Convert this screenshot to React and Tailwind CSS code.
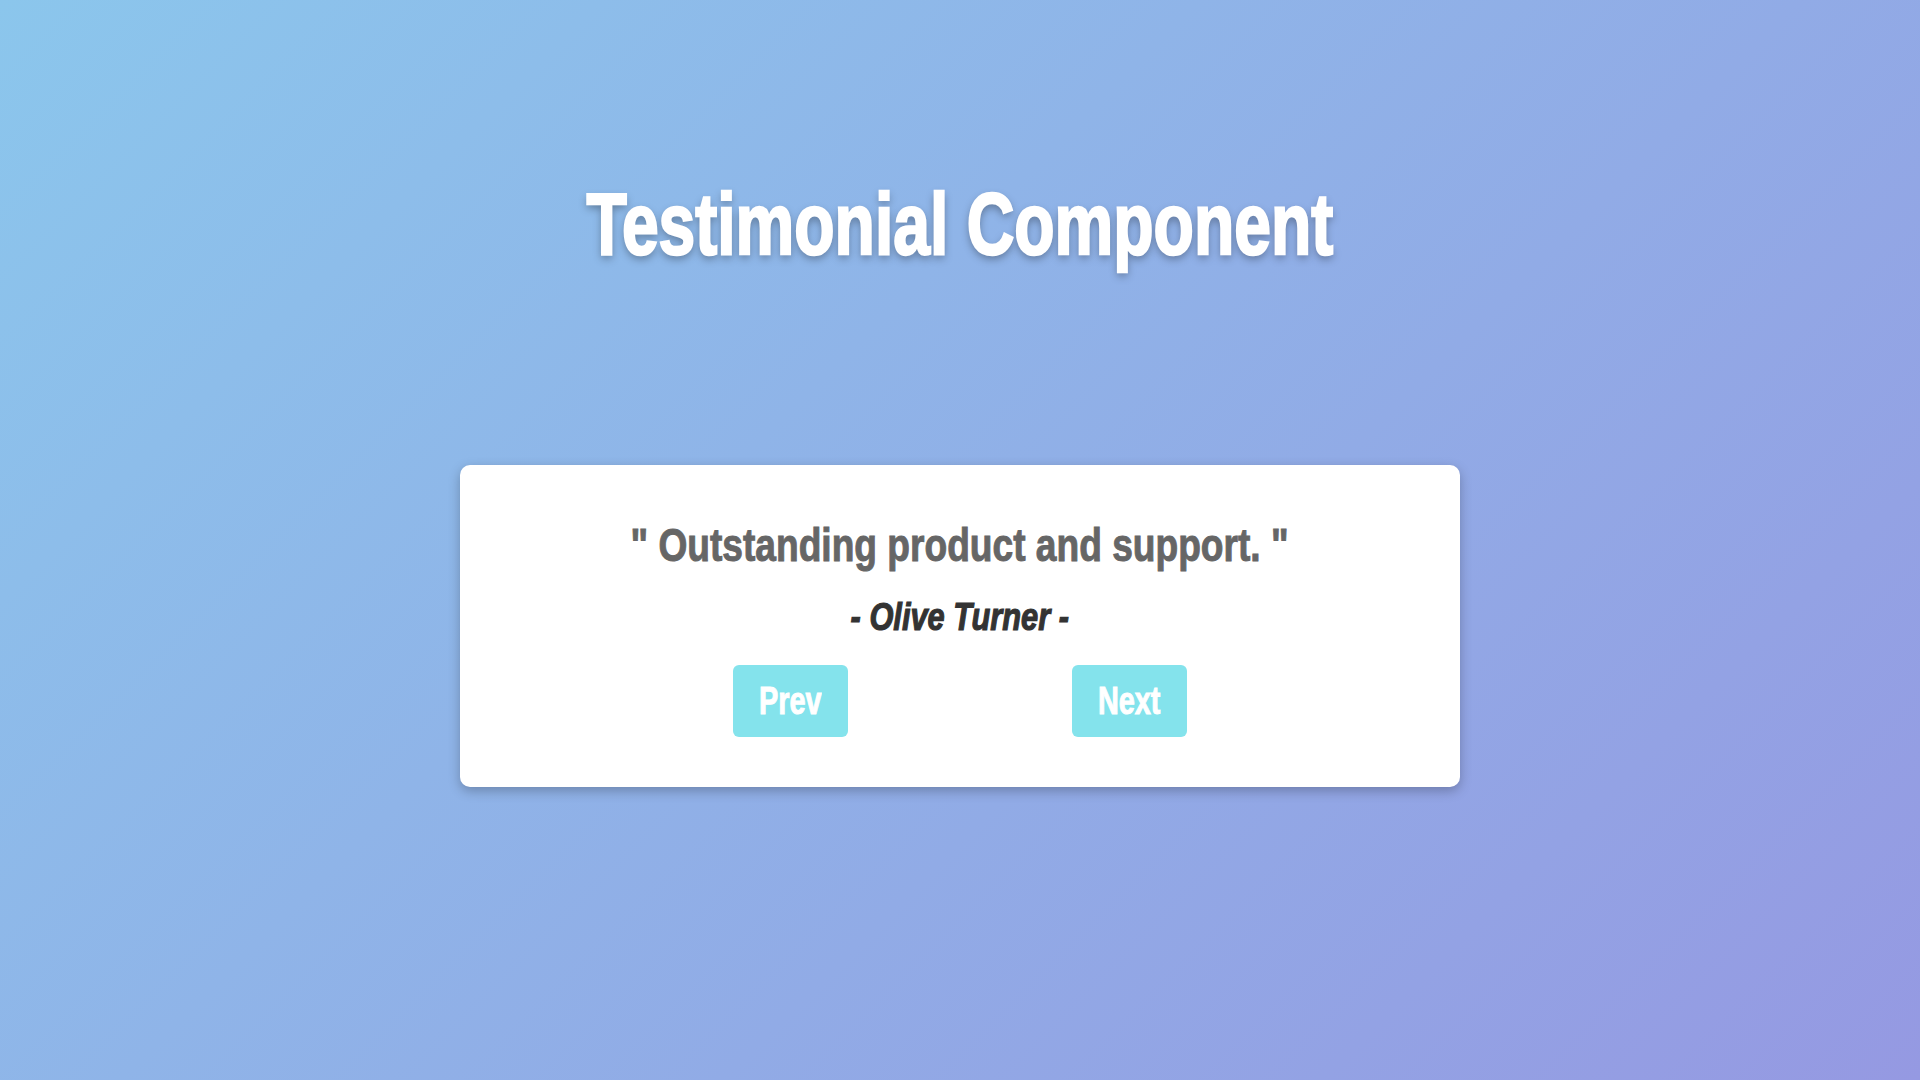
const testimonials = [
  { quote: 'Outstanding product and support.', author: 'Olive Turner' },
];

// no condensed face installed, so the text is narrowed with scale-x
const App = () => {
  const current = testimonials[0];

  return (
    <div className="min-h-screen w-full bg-[linear-gradient(135deg,#8bc6ec_0%,#9599e2_100%)] font-['Liberation_Sans',Arial,sans-serif] flex flex-col items-center">
      <h1 className="mt-[178px] text-[88px] leading-[92px] font-bold text-white scale-x-[0.75] [-webkit-text-stroke:2.5px_white] [text-shadow:0_4px_10px_rgba(0,0,0,0.35)]">
        Testimonial Component
      </h1>

      <div className="mt-[195px] w-[1000px] h-[322px] bg-white rounded-[10px] shadow-[0_4px_12px_rgba(0,0,0,0.25)] flex flex-col items-center pt-[52px]">
        <p className="text-[47px] leading-[56px] font-bold text-[#666] scale-x-[0.79] [-webkit-text-stroke:1px_#666]">
          " {current.quote} "
        </p>
        <p className="mt-[22px] text-[38px] leading-[44px] font-bold italic text-[#333] scale-x-[0.81] [-webkit-text-stroke:1.2px_#333]">
          - {current.author} -
        </p>
        <div className="mt-[26px] flex gap-[224px]">
          <button className="w-[115px] h-[72px] rounded-[6px] bg-[#84e3ec] text-white text-[38px] font-bold">
            <span className="inline-block scale-x-[0.76] [-webkit-text-stroke:1px_white]">Prev</span>
          </button>
          <button className="w-[115px] h-[72px] rounded-[6px] bg-[#84e3ec] text-white text-[38px] font-bold">
            <span className="inline-block scale-x-[0.76] [-webkit-text-stroke:1px_white]">Next</span>
          </button>
        </div>
      </div>
    </div>
  );
};

export default App;
